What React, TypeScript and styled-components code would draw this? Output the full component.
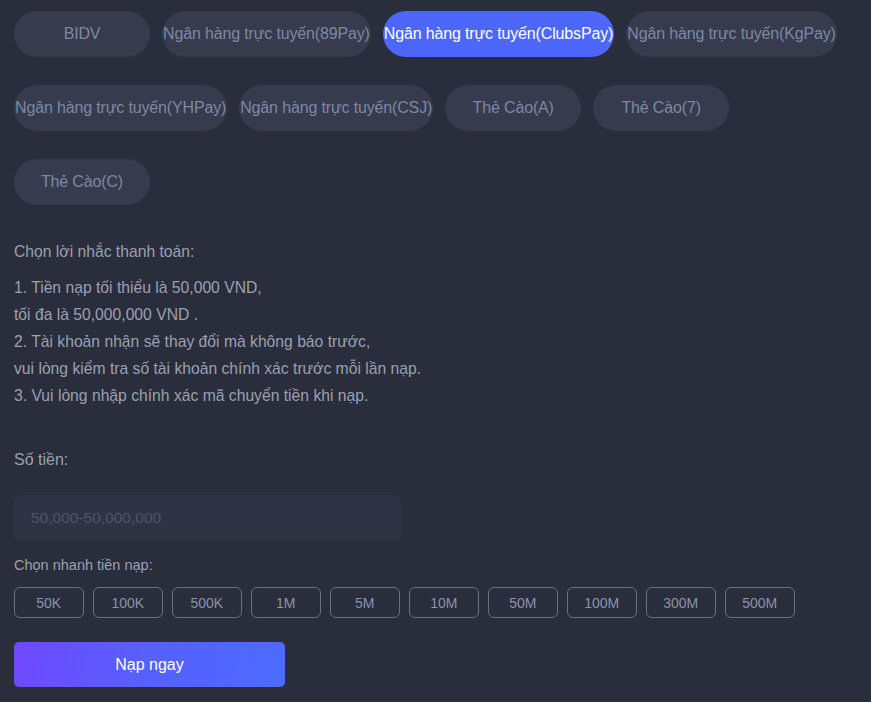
import styled, { createGlobalStyle } from "styled-components";

const GlobalStyle = createGlobalStyle`
  html, body {
    margin: 0;
    padding: 0;
    background: #2a2d3b;
  }
  body {
    font-family: "Liberation Sans", Arial, sans-serif;
  }
`;

interface ActiveProps {
  $active?: boolean
}

const Page = styled.div`
  min-height: 702px;
  box-sizing: border-box;
  padding: 11px 14px 0;
  background: #2a2d3b;
`;

const Tabs = styled.div`
  display: flex;
  flex-wrap: wrap;
  column-gap: 12px;
  row-gap: 28px;
`;

const Tab = styled.div<ActiveProps>`
  display: inline-flex;
  align-items: center;
  justify-content: center;
  min-width: 136px;
  height: 46px;
  padding: 0 1px;
  box-sizing: border-box;
  border-radius: 23px;
  font-size: 16px;
  letter-spacing: -0.15px;
  white-space: nowrap;
  background: ${({ $active }) => ($active ? "#4d67fd" : "#363b4e")};
  color: ${({ $active }) => ($active ? "#ffffff" : "#7e88a3")};
`;

const Notice = styled.div`
  margin-top: 37px;
  font-size: 15.7px;
  color: #9aa0b2;
`;

const NoticeTitle = styled.p`
  margin: 0 0 12px;
  line-height: 20px;
`;

const NoticeText = styled.p`
  margin: 0;
  line-height: 27px;
`;

const Label = styled.p`
  margin: 41px 0 0;
  font-size: 16px;
  line-height: 20px;
  color: #9aa0b2;
`;

const AmountInput = styled.input`
  display: block;
  width: 387px;
  height: 45px;
  margin-top: 25px;
  box-sizing: border-box;
  padding: 0 17px;
  border: none;
  outline: none;
  border-radius: 6px;
  background: #2f3343;
  font-family: "Liberation Sans", Arial, sans-serif;
  font-size: 15.5px;
  color: #c0c4d0;

  &::placeholder {
    color: #4f5569;
  }
`;

const QuickLabel = styled.p`
  margin: 16px 0 0;
  font-size: 14.5px;
  line-height: 18px;
  color: #9aa0b2;
`;

const Chips = styled.div`
  display: flex;
  gap: 9.5px;
  margin-top: 13px;
`;

const Chip = styled.div`
  display: flex;
  align-items: center;
  justify-content: center;
  width: 69.5px;
  height: 31px;
  box-sizing: border-box;
  border: 1px solid #696e80;
  border-radius: 6px;
  font-size: 14px;
  color: #8a93ad;
`;

const SubmitButton = styled.button`
  display: block;
  width: 271px;
  height: 45px;
  margin-top: 24px;
  border: none;
  border-radius: 5px;
  background: linear-gradient(100deg, #7048fd 0%, #5661fd 50%, #4b6bfe 100%);
  font-family: "Liberation Sans", Arial, sans-serif;
  font-size: 16px;
  color: #ffffff;
`;

const methods = [
  "BIDV",
  "Ngân hàng trực tuyến(89Pay)",
  "Ngân hàng trực tuyến(ClubsPay)",
  "Ngân hàng trực tuyến(KgPay)",
  "Ngân hàng trực tuyến(YHPay)",
  "Ngân hàng trực tuyến(CSJ)",
  "Thẻ Cào(A)",
  "Thẻ Cào(7)",
  "Thẻ Cào(C)",
];

const amounts = ["50K", "100K", "500K", "1M", "5M", "10M", "50M", "100M", "300M", "500M"];

export default function App() {
  return (
    <>
      <GlobalStyle />
      <Page>
        <Tabs>
          {methods.map((m, i) => (
            <Tab key={m} $active={i === 2}>
              {m}
            </Tab>
          ))}
        </Tabs>

        <Notice>
          <NoticeTitle>Chọn lời nhắc thanh toán:</NoticeTitle>
          <NoticeText>1. Tiền nạp tối thiểu là 50,000 VND,</NoticeText>
          <NoticeText>tối đa là 50,000,000 VND .</NoticeText>
          <NoticeText>2. Tài khoản nhận sẽ thay đổi mà không báo trước,</NoticeText>
          <NoticeText>vui lòng kiểm tra số tài khoản chính xác trước mỗi lần nạp.</NoticeText>
          <NoticeText>3. Vui lòng nhập chính xác mã chuyển tiền khi nạp.</NoticeText>
        </Notice>

        <Label>Số tiền:</Label>
        <AmountInput placeholder="50,000-50,000,000" />

        <QuickLabel>Chọn nhanh tiền nạp:</QuickLabel>
        <Chips>
          {amounts.map((a) => (
            <Chip key={a}>{a}</Chip>
          ))}
        </Chips>

        <SubmitButton>Nạp ngay</SubmitButton>
      </Page>
    </>
  );
}
